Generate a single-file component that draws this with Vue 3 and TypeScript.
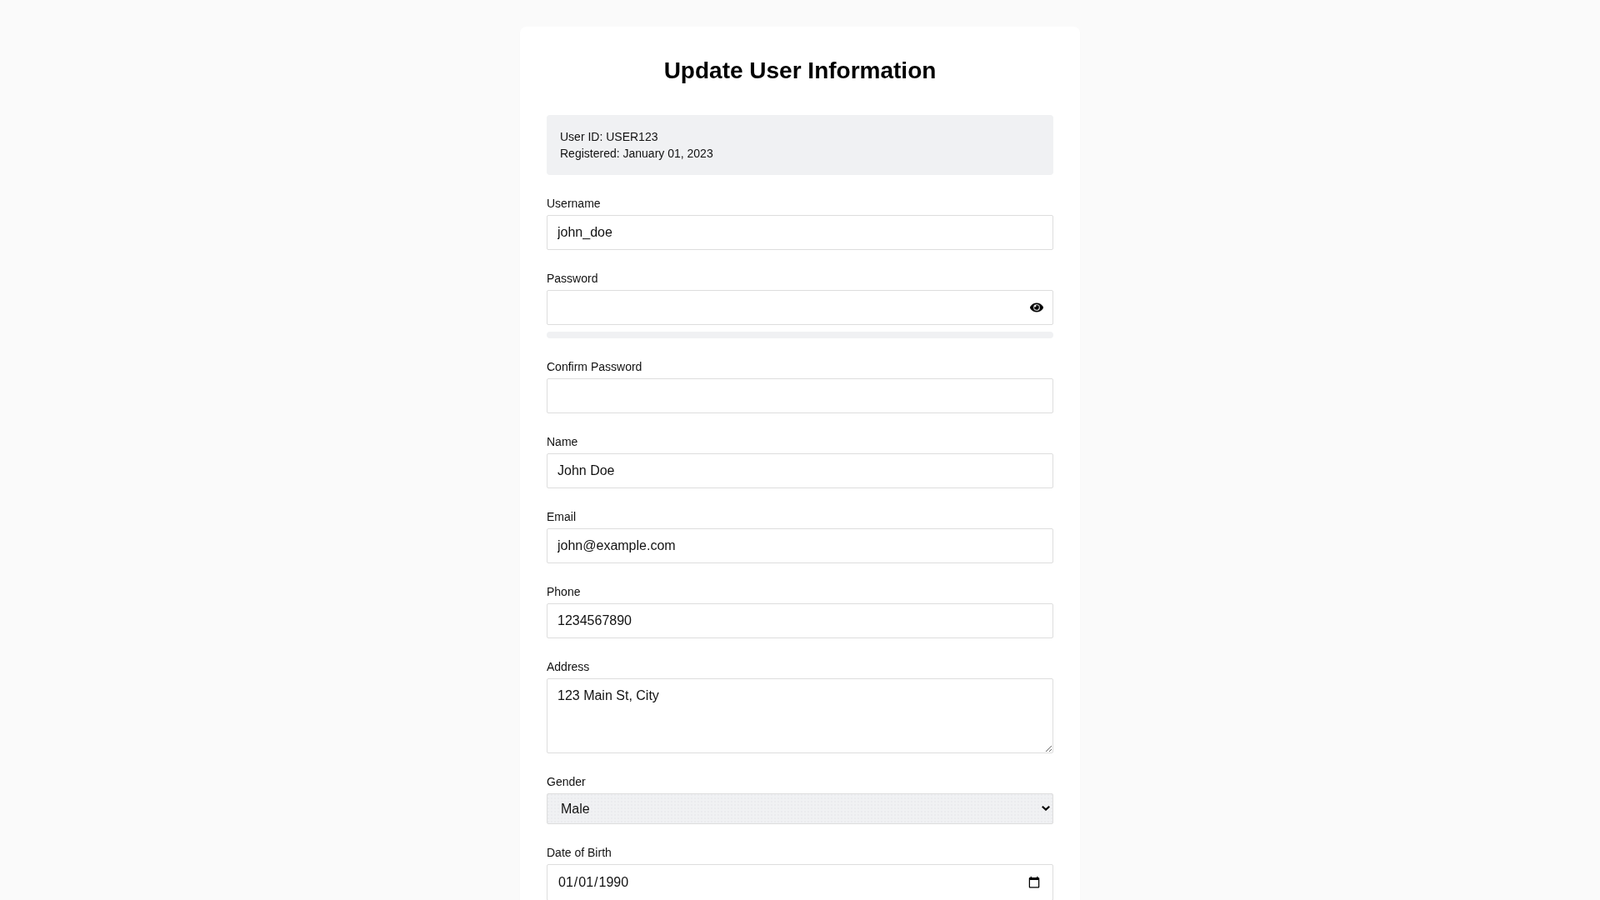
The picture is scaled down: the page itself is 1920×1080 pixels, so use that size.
<template>
  <div class="page">
    <div class="card">
      <h1 class="title">Update User Information</h1>

      <div class="info-box">
        <div>User ID: {{ user.id }}</div>
        <div>Registered: {{ user.registered }}</div>
      </div>

      <form @submit.prevent>
        <div class="form-group">
          <label for="username">Username</label>
          <input id="username" v-model="user.username" type="text" />
        </div>

        <div class="form-group">
          <label for="password">Password</label>
          <div class="field-wrap">
            <input id="password" v-model="user.password" :type="showPassword ? 'text' : 'password'" />
            <button type="button" class="eye-btn" @click="showPassword = !showPassword">
              <svg viewBox="0 0 576 512" width="16" height="16" fill="currentColor" stroke="currentColor" stroke-width="14">
                <path d="M572.52 241.4C518.29 135.59 410.93 64 288 64S57.68 135.64 3.48 241.41a32.35 32.35 0 0 0 0 29.19C57.71 376.41 165.07 448 288 448s230.32-71.64 284.52-177.41a32.35 32.35 0 0 0 0-29.19zM288 400a144 144 0 1 1 144-144 143.93 143.93 0 0 1-144 144zm0-240a95.31 95.31 0 0 0-25.31 3.79 47.85 47.85 0 0 1-66.9 66.9A95.78 95.78 0 1 0 288 160z" />
              </svg>
            </button>
          </div>
          <div class="strength-bar"></div>
        </div>

        <div class="form-group">
          <label for="confirm">Confirm Password</label>
          <input id="confirm" v-model="user.confirm" type="password" />
        </div>

        <div class="form-group">
          <label for="name">Name</label>
          <input id="name" v-model="user.name" type="text" />
        </div>

        <div class="form-group">
          <label for="email">Email</label>
          <input id="email" v-model="user.email" type="email" />
        </div>

        <div class="form-group">
          <label for="phone">Phone</label>
          <input id="phone" v-model="user.phone" type="tel" />
        </div>

        <div class="form-group">
          <label for="address">Address</label>
          <textarea id="address" v-model="user.address"></textarea>
        </div>

        <div class="form-group">
          <label for="gender">Gender</label>
          <div class="field-wrap">
            <select id="gender" v-model="user.gender">
              <option>Male</option>
              <option>Female</option>
              <option>Other</option>
            </select>
            <svg class="chevron" viewBox="0 0 10 6" width="10" height="6" fill="none" stroke="currentColor" stroke-width="2.2">
              <path d="M0.8 0.8 5 4.6 9.2 0.8" />
            </svg>
          </div>
        </div>

        <div class="form-group">
          <label for="dob">Date of Birth</label>
          <input id="dob" v-model="user.dob" class="date-input" type="date" />
        </div>
      </form>
    </div>
  </div>
</template>

<script setup lang="ts">
import { reactive, ref } from 'vue'

const showPassword = ref(false)

const user = reactive({
  id: 'USER123',
  registered: 'January 01, 2023',
  username: 'john_doe',
  password: '',
  confirm: '',
  name: 'John Doe',
  email: 'john@example.com',
  phone: '1234567890',
  address: '123 Main St, City',
  gender: 'Male',
  dob: '1990-01-01'
})
</script>

<style>
body {
  background: #fafafa;
}
</style>

<style scoped>
.page {
  padding: 32px 0;
  font-family: "Liberation Sans", Arial, sans-serif;
  color: #111;
}

.card {
  width: 672px;
  box-sizing: border-box;
  margin: 0 auto;
  padding: 32px;
  background: #fff;
  border-radius: 8px;
  box-shadow: 0 1px 3px rgba(0, 0, 0, 0.02);
  will-change: transform;
}

.title {
  margin: 0 0 32px;
  font-size: 28px;
  line-height: 42px;
  font-weight: 700;
  text-align: center;
  color: #000;
}

.info-box {
  margin-bottom: 24px;
  padding: 16px;
  background: #f0f1f3;
  border-radius: 4px;
  font-size: 14px;
  line-height: 20px;
}

.form-group {
  margin-bottom: 24px;
}

label {
  display: block;
  margin-bottom: 4px;
  font-size: 14px;
  line-height: 20px;
}

input,
textarea,
select {
  display: block;
  width: 100%;
  box-sizing: border-box;
  border: 1px solid #ddd;
  border-radius: 2px;
  background-color: #fff;
  font-family: inherit;
  font-size: 16px;
  color: #111;
}

input,
textarea {
  height: 42px;
  padding: 11px 12px;
}

textarea {
  height: 90px;
}

.date-input {
  height: 44px;
}

select {
  height: 37px;
  padding: 8px 24px 8px 16px;
  appearance: none;
  background-color: #f0f1f3;
  background-image: radial-gradient(circle at 1px 1px, #e4e5e7 0.6px, transparent 0.8px);
  background-size: 4px 4px;
}

.field-wrap {
  position: relative;
}

.chevron {
  position: absolute;
  top: 15px;
  right: 4px;
  color: #000;
  pointer-events: none;
}

.eye-btn {
  position: absolute;
  top: 13px;
  right: 12px;
  padding: 0;
  border: none;
  background: none;
  color: #000;
  display: flex;
  cursor: pointer;
}

.strength-bar {
  height: 8px;
  margin-top: 8px;
  background: #f0f1f3;
  border-radius: 4px;
}
</style>
